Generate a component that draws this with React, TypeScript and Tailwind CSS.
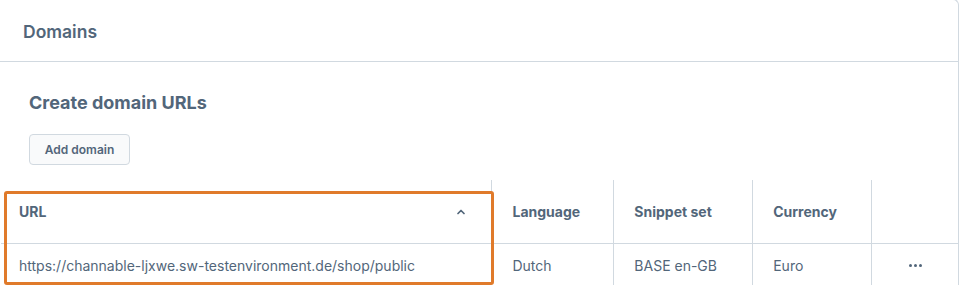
import { ChevronUp } from 'lucide-react';

const columns = [
  { label: 'Language', value: 'Dutch', width: 'w-[122px]' },
  { label: 'Snippet set', value: 'BASE en-GB', width: 'w-[139px]' },
  { label: 'Currency', value: 'Euro', width: 'w-[119px]' },
];

const App = () => {
  return (
    <div
      className="w-[959px] h-[285px] overflow-hidden bg-white text-[#52667a]"
      style={{ fontFamily: 'Inter, "Noto Sans", sans-serif' }}
    >
      <div className="relative ml-[-1px] w-[960px] border-t border-r border-l border-[#d1d9e0] rounded-tr-md h-[300px] -mt-px">
        {/* Card header */}
        <div className="h-[62px] flex items-center pl-[23px] pt-[2px] border-b border-[#d1d9e0]">
          <h2 className="text-[17.5px] font-semibold leading-none">Domains</h2>
        </div>

        {/* Card body */}
        <div className="pt-[30px] pl-[30px]">
          <h3 className="text-[18px] font-bold leading-[22px] -ml-px">Create domain URLs</h3>
          <button className="mt-[20px] -ml-px h-[31px] w-[101px] border border-[#d1d9e0] bg-[#f9fafb] rounded-[4px] text-[12px] font-semibold text-[#52667a]">
            Add domain
          </button>
        </div>

        {/* Grid */}
        <div className="mt-[15px] ml-px">
          <div className="flex h-[64px] border-b border-[#d1d9e0]">
            <div className="w-[491px] flex items-center justify-between pl-[18px] pr-[24px]">
              <span className="text-[14px] font-bold">URL</span>
              <ChevronUp size={12} strokeWidth={3.5} className="text-[#52667a]" />
            </div>
            {columns.map((c) => (
              <div
                key={c.label}
                className={`${c.width} flex items-center pl-[20px] border-l border-[#d1d9e0]`}
              >
                <span className="text-[14px] font-bold">{c.label}</span>
              </div>
            ))}
            <div className="w-[87px] border-l border-[#d1d9e0]" />
          </div>
          <div className="flex h-[42px]">
            <div className="w-[491px] flex items-center pl-[18px]">
              <span className="text-[14px]">https://channable-ljxwe.sw-testenvironment.de/shop/public</span>
            </div>
            {columns.map((c) => (
              <div
                key={c.label}
                className={`${c.width} flex items-center pl-[20px] border-l border-[#d1d9e0]`}
              >
                <span className="text-[14px]">{c.value}</span>
              </div>
            ))}
            <div className="w-[87px] flex items-center justify-center border-l border-[#d1d9e0]">
              <span className="flex gap-[2px]">
                <span className="w-[3px] h-[3px] rounded-full bg-[#52667a]" />
                <span className="w-[3px] h-[3px] rounded-full bg-[#52667a]" />
                <span className="w-[3px] h-[3px] rounded-full bg-[#52667a]" />
              </span>
            </div>
          </div>
        </div>

        {/* Highlight overlay */}
        <div className="absolute left-[4px] top-[191px] w-[490px] h-[94px] border-[3px] border-[#e07a2a] rounded-[3px] pointer-events-none" />
      </div>
    </div>
  );
};

export default App;
